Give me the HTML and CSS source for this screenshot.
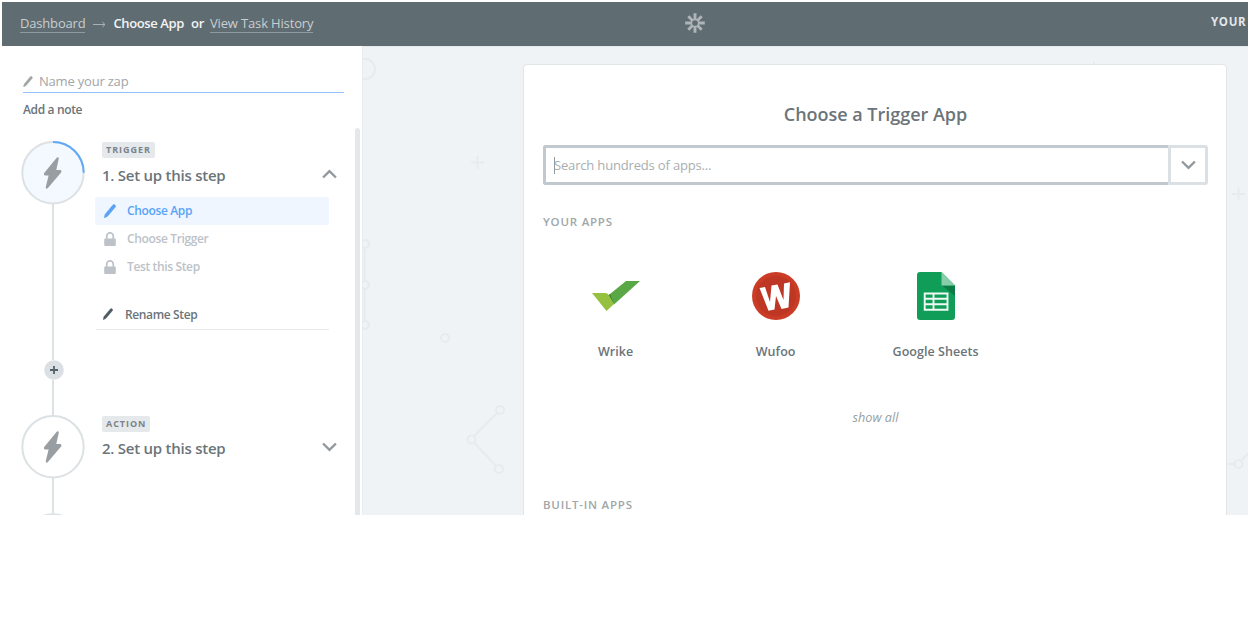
FILE: index.html
```html
<!DOCTYPE html>
<html lang="en">
<head>
<meta charset="utf-8">
<title>Choose App</title>
<link rel="stylesheet" href="styles.css">
</head>
<body>
<svg class="defs" width="0" height="0">
  <symbol id="pencil" viewBox="0 0 12 14"><path d="M8.6 1.2 Q9.6-.2 11 .9 Q12.2 2 11.2 3.2 L3.6 12.2 L.3 14 L1 10.4Z" fill="currentColor" stroke="currentColor" stroke-width=".5"/></symbol>
  <symbol id="lock" viewBox="0 0 12 14"><path d="M2.7 7V4.2a3.3 3.3 0 0 1 6.6 0V7" fill="none" stroke="currentColor" stroke-width="1.7"/><rect x=".2" y="6.4" width="11.6" height="7.6" rx="1.2" fill="currentColor"/></symbol>
  <symbol id="bolt" viewBox="0 0 18 32"><path d="M13.2.6 Q15.4-.4 15 2 L12.6 13 H16.6 Q18.6 13.4 17.6 15.3 L4.2 31 Q2 32.6 2 30.2 L4.9 18.4 H1.4 Q-.5 18 .5 15.9Z" fill="currentColor"/></symbol>
  <symbol id="chevron" viewBox="0 0 14 9"><path d="M1 1.2 7 7.2 13 1.2" fill="none" stroke="currentColor" stroke-width="2.200"/></symbol>
</svg>
<div class="app">
  <header class="topbar">
    <nav class="crumbs">
      <a class="crumb-link">Dashboard</a>
      <svg class="arrow" width="13" height="7" viewBox="0 0 13 7"><path d="M0 3.5H12M9.3 1 12 3.5 9.3 6" fill="none" stroke="#a9b0b4" stroke-width="1"/></svg>
      <span class="crumb-now">Choose App</span>
      <span class="crumb-or">or</span>
      <a class="crumb-link history">View Task History</a>
    </nav>
    <svg class="logo" width="20" height="20" viewBox="-10 -10 20 20"><g stroke="#b0b5b8" stroke-width="2.900"><path d="M0-9.8V-3M0 3V9.8M-9.8 0H-3M3 0H9.8M-6.7-6.7-2.500-2.500M2.500 2.500 6.7 6.7M-6.7 6.7-2.500 2.500M2.500-2.500 6.7-6.7"/></g><circle r="3.6" fill="none" stroke="#b0b5b8" stroke-width="1.5"/></svg>
    <span class="account">YOUR</span>
  </header>
  <div class="main">
    <aside class="sidebar">
      <div class="zap-name"><svg class="name-icon"><use href="#pencil"/></svg><span>Name your zap</span></div>
      <div class="note">Add a note</div>
      <div class="steps">
        <section class="step first">
          <div class="rail">
            <svg class="node" width="64" height="64" viewBox="0 0 64 64"><circle cx="32" cy="31.700" r="30.7" fill="#f4f9ff" stroke="#dce1e4" stroke-width="2"/><path d="M32 1A30.7 30.7 0 0 1 62.7 31.700" fill="none" stroke="#5fa8f8" stroke-width="2"/><use href="#bolt" x="22.700" y="16" width="18" height="32" color="#989ea1"/></svg>
            <div class="line long"></div>
            <svg class="plus" width="20" height="20" viewBox="0 0 20 20"><circle cx="10" cy="10" r="9.8" fill="#dbe0e4"/><path d="M6 10h8M10 6v8" stroke="#566269" stroke-width="1.8"/></svg>
            <div class="line"></div>
          </div>
          <div class="body">
            <span class="badge">TRIGGER</span>
            <div class="heading"><h2>1. Set up this step</h2><svg class="chev up"><use href="#chevron"/></svg></div>
            <ul class="tasks">
              <li class="active"><svg><use href="#pencil"/></svg><span>Choose App</span></li>
              <li><svg><use href="#lock"/></svg><span>Choose Trigger</span></li>
              <li><svg><use href="#lock"/></svg><span>Test this Step</span></li>
            </ul>
            <div class="rename"><svg><use href="#pencil"/></svg><span>Rename Step</span></div>
          </div>
        </section>
        <section class="step">
          <div class="rail">
            <svg class="node" width="64" height="64" viewBox="0 0 64 64"><circle cx="32" cy="31.700" r="30.7" fill="#fff" stroke="#dce1e4" stroke-width="2"/><use href="#bolt" x="22.700" y="16" width="18" height="32" color="#989ea1"/></svg>
            <div class="line short"></div>
            <svg width="64" height="64" viewBox="0 0 64 64"><circle cx="32" cy="32" r="30.700" fill="#fff" stroke="#dce1e4" stroke-width="2"/></svg>
          </div>
          <div class="body">
            <span class="badge">ACTION</span>
            <div class="heading"><h2>2. Set up this step</h2><svg class="chev"><use href="#chevron"/></svg></div>
          </div>
        </section>
      </div>
      <div class="scrollbar"></div>
    </aside>
    <main class="canvas">
      <svg class="pattern" width="886" height="469" viewBox="362 46 886 469"><g fill="none" stroke="#e7ebed" stroke-width="2">
        <circle cx="365" cy="69" r="10"/><path d="M471 162.500h13M477.500 156v13M1232 194h13M1238.500 187.500v13M1094 62v6M364.500 248v32M364.500 289v31"/>
        <circle cx="365" cy="244" r="4"/><circle cx="365" cy="285" r="4"/><circle cx="365" cy="325" r="4"/><circle cx="445" cy="338" r="4"/>
        <circle cx="500" cy="410" r="4"/><circle cx="471.500" cy="439.500" r="4"/><circle cx="499" cy="469" r="4"/><path d="M497 413 474 436.500M474 442.500 496 466M1226 464h8.500M1241 461 1250 451"/><circle cx="1238.500" cy="464" r="4"/>
      </g></svg>
      <div class="card">
        <h1>Choose a Trigger App</h1>
        <div class="search">
          <div class="field"><span class="caret"></span><span>Search hundreds of apps...</span></div>
          <div class="toggle"><svg class="chev"><use href="#chevron"/></svg></div>
        </div>
        <h3>YOUR APPS</h3>
        <div class="apps">
          <div class="tile">
            <svg width="48" height="48" viewBox="0 0 48 48"><path d="M15.500 24 34 9H48L22 32.500Z" fill="#5aa746"/><path d="M18 22 22 32.500 15.500 26Z" fill="#347a34"/><path d="M0 21H13Q16 21 17.500 24L22 32 14.500 39Z" fill="#96c140"/></svg>
            <span>Wrike</span>
          </div>
          <div class="tile">
            <svg width="48" height="48" viewBox="0 0 48 48"><circle cx="24" cy="24" r="24" fill="#ca3c25"/><circle cx="24" cy="24" r="20" fill="#be3725"/><path d="M7.500 16 13 15 18 30 19.500 13.500 25.500 12.500 31.500 28 32 11.500 38 10.300 36.500 35.500 29.500 37 24 24 22.500 37.500 16.500 38.700Z" fill="#fff"/></svg>
            <span>Wufoo</span>
          </div>
          <div class="tile">
            <svg width="48" height="48" viewBox="0 0 48 48"><path d="M8 0H29.500L43 13.500V45a3 3 0 0 1-3 3H8a3 3 0 0 1-3-3V3a3 3 0 0 1 3-3Z" fill="#109d58"/><path d="M30 13.500H43V24Z" fill="#0b7c45"/><path d="M29.500 0 43 13.500H29.500Z" fill="#86cdaa"/><path d="M12.700 21.500H35.500V37.800H12.700ZM12.700 26.800H35.500M12.700 32.200H35.500M21.500 21.500V37.800" fill="none" stroke="#effaf4" stroke-width="1.900"/></svg>
            <span>Google Sheets</span>
          </div>
        </div>
        <div class="show-all">show all</div>
        <h3 class="builtin">BUILT-IN APPS</h3>
      </div>
    </main>
  </div>
</div>
</body>
</html>
```
FILE: styles.css
```css
* { box-sizing: border-box; }
body { margin: 0; background: #fff; font-family: "Open Sans", "Noto Sans", sans-serif; font-size: 13px; color: #6b7479; white-space: nowrap; overflow: hidden; }
h1, h2, h3, ul { margin: 0; padding: 0; font-weight: 600; list-style: none; }
svg { display: block; flex: none; }
.defs { position: absolute; }
.app { margin: 2px 0 0 2px; width: 1246px; height: 513px; overflow: hidden; }
.topbar { display: grid; grid-template-columns: 683px 20px 1fr; align-items: center; height: 44px; background: #5f6c72; }
.crumbs { display: flex; align-items: center; padding-left: 18px; color: #f2f4f4; margin-top: -2px; }
.crumb-link { color: #c9ced0; line-height: 18px; border-bottom: 1px solid #919a9e; height: 19px; margin-top: 1px; letter-spacing: -.18px; }
.arrow { margin: 3px 7px 0 8px; }
.crumb-now { font-weight: 600; letter-spacing: -.38px; }
.crumb-or { font-weight: 600; margin: 0 6px 0 7px; letter-spacing: -.3px; }
.history { letter-spacing: -.15px; }
.logo { margin-top: -3px; }
.account { color: #e4e7e8; font-weight: 700; font-size: 11.5px; letter-spacing: .65px; padding-left: 506px; margin-top: -5px; }
.main { display: flex; height: 469px; }
.sidebar { position: relative; width: 360px; height: 469px; overflow: hidden; flex: none; background: #fff; padding: 24px 0 0 19px; }
.zap-name { display: flex; align-items: center; width: 321px; height: 23px; margin-left: 2px; border-bottom: 1px solid #90c1fb; color: #a0a5a7; letter-spacing: -.2px; }
.name-icon { width: 10px; height: 11px; margin: 0 6px 0 0; }
.note { margin: 6px 0 0 2px; line-height: 21px; font-size: 12px; font-weight: 600; letter-spacing: -.35px; }
.steps { padding-top: 21px; }
.step { display: flex; height: 200px; }
.step.first { height: 273.500px; }
.rail { width: 64px; display: flex; flex-direction: column; align-items: center; }
.rail .node { margin-bottom: -1px; margin-left: -1px; }
.line { width: 2px; height: 37px; background: #dce1e4; flex: none; }
.line.long { height: 156px; }
.line.short { height: 35px; }
.plus { margin-left: 1px; }
.body { width: 245px; margin-left: 10px; padding-top: 1px; }
.badge { display: block; width: max-content; height: 16px; margin-left: 7px; padding: 0 4px; background: #e6e9ec; border-radius: 2px; font-size: 9px; line-height: 15px; font-weight: 700; letter-spacing: .95px; color: #7b8388; }
.heading { display: flex; align-items: center; justify-content: space-between; height: 38px; padding: 0 3px 0 7px; }
.heading h2 { font-size: 15px; line-height: 20px; font-weight: 600; letter-spacing: -.25px; margin-top: -5px; }
.chev { width: 15px; height: 10px; color: #91999e; }
.heading .chev { margin-top: -7px; }
.chev.up { transform: rotate(180deg); }
.tasks { padding-top: 1px; }
.tasks li { display: flex; align-items: center; width: 234px; height: 28px; padding-left: 8px; font-size: 12px; font-weight: 600; letter-spacing: -.36px; color: #bcc2c8; }
.tasks svg { width: 12px; height: 14px; margin: 0 11px 0 1px; }
.tasks span { margin-top: -1px; }
.tasks .active { color: #5aa3f5; background: #eff6ff; border-radius: 2px; }
.rename { display: flex; align-items: center; width: 233px; height: 31px; margin-top: 18px; margin-left: 1px; padding-left: 7px; border-bottom: 1px solid #e8ebed; font-size: 12px; font-weight: 600; letter-spacing: -.37px; }
.rename svg { width: 10px; height: 12px; margin-right: 12px; color: #4e5b62; }
.scrollbar { position: absolute; left: 353px; top: 82px; width: 5px; height: 400px; border-radius: 3px; background: #e3e8ea; }
.canvas { position: relative; flex: 1; background: #eff3f5; padding: 19px 0 0 161px; border-left: 1px solid #e9edf0; border-top: 1px solid #e4e9eb; }
.pattern { position: absolute; left: -1px; top: -1px; }
.card { position: relative; width: 704px; height: 500px; margin-top: -2px; margin-left: -1px; background: #fff; border: 1px solid #e1e6e9; border-radius: 4px; padding: 37px 18px 0 19px; }
h1 { font-size: 18px; line-height: 26px; font-weight: 600; text-align: center; letter-spacing: -.02px; margin-top: -1px; }
.search { display: flex; height: 40px; margin-top: 18px; }
.field { display: flex; align-items: center; flex: 1; border: 3px solid #c1c9cf; border-right: 0; border-radius: 3px 0 0 3px; color: #a9aeb0; padding-left: 8px; letter-spacing: -.17px; }
.caret { width: 1px; height: 17px; background: #929b9f; margin-right: -1px; }
.toggle { display: flex; align-items: center; justify-content: center; width: 40px; border: 3px solid #dbe0e4; border-radius: 0 3px 3px 0; }
h3 { font-size: 11.5px; line-height: 16px; margin-top: 29px; letter-spacing: .78px; font-weight: 600; color: #a0a6a9; }
.apps { display: grid; grid-template-columns: repeat(3, 160px); margin: 42px 0 0 -7.400px; }
.tile { display: flex; flex-direction: column; align-items: center; gap: 21px; font-size: 12.500px; line-height: 21px; font-weight: 600; letter-spacing: .05px; }
.show-all { margin-top: 45px; line-height: 20px; font-size: 12.700px; font-style: italic; text-align: center; color: #999fa2; }
.builtin { margin-top: 70px; }
```
